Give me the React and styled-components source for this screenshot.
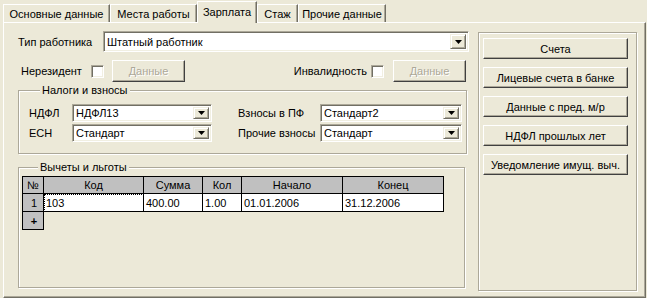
import React from "react";
import styled, { createGlobalStyle } from "styled-components";

const GlobalStyle = createGlobalStyle`
  html, body {
    margin: 0;
    padding: 0;
    background: #ece9d8;
  }
  body {
    font-family: "Liberation Sans", Arial, sans-serif;
    font-size: 11px;
    color: #000;
  }
`;

const Window = styled.div`
  width: 647px;
  height: 298px;
  display: flex;
  flex-direction: column;
  background: #ece9d8;
  overflow: hidden;
`;

const TabBar = styled.div`
  height: 22px;
  display: flex;
  align-items: flex-end;
  padding-left: 3px;
  box-sizing: border-box;
`;

const Tab = styled.div`
  width: ${(p) => p.$w}px;
  height: 18px;
  box-sizing: border-box;
  display: flex;
  align-items: center;
  justify-content: center;
  padding-top: 1px;
  border-top: 1px solid #fff;
  border-left: 1px solid #fff;
  border-right: 1px solid #716f64;
  box-shadow: inset -1px 0 0 #aca899;
  background: #ece9d8;
  white-space: nowrap;
  ${(p) =>
    p.$active &&
    `
    position: relative;
    z-index: 1;
    margin-bottom: -1px;
    height: 22px;
    padding-top: 0;
    padding-bottom: 1px;
  `}
`;

const Panel = styled.div`
  flex: 1;
  margin: 0 1px 0 3px;
  display: flex;
  align-items: flex-start;
  padding: 8px 0 0 14px;
  border-top: 1px solid #fff;
  border-left: 1px solid #fff;
  border-right: 1px solid #716f64;
  border-bottom: 1px solid #716f64;
  box-shadow: inset -1px -1px 0 #aca899;
  box-sizing: border-box;
`;

const LeftCol = styled.div`
  width: 451px;
  display: flex;
  flex-direction: column;
`;

const Row = styled.div`
  display: flex;
  align-items: center;
  height: ${(p) => p.$h || 21}px;
  margin-top: ${(p) => p.$mt || 0}px;
  padding-left: ${(p) => p.$pl || 0}px;
  padding-right: ${(p) => p.$pr || 0}px;
`;

const Label = styled.span`
  width: ${(p) => (p.$w ? `${p.$w}px` : "auto")};
  flex-shrink: 0;
  white-space: nowrap;
`;

const Spacer = styled.div`
  flex: 1;
`;

const SelectBox = styled.div`
  flex: ${(p) => (p.$w ? "none" : 1)};
  width: ${(p) => (p.$w ? `${p.$w}px` : "auto")};
  height: ${(p) => p.$h || 21}px;
  box-sizing: border-box;
  display: flex;
  align-items: center;
  background: #fff;
  border: 1px solid;
  border-color: #aca899 #fff #fff #aca899;
  box-shadow: inset 1px 1px 0 #716f64, inset -1px -1px 0 #f1efe2;
  padding: 2px 2px 2px 3px;
`;

const SelectText = styled.span`
  flex: 1;
  white-space: nowrap;
  overflow: hidden;
`;

const DropButton = styled.div`
  width: 16px;
  height: 100%;
  box-sizing: border-box;
  display: flex;
  align-items: center;
  justify-content: center;
  background: #ece9d8;
  border: 1px solid;
  border-color: #f1efe2 #716f64 #716f64 #f1efe2;
  box-shadow: inset 1px 1px 0 #fff, inset -1px -1px 0 #aca899;
`;

const Checkbox = styled.div`
  width: 13px;
  height: 13px;
  box-sizing: border-box;
  flex-shrink: 0;
  background: #fff;
  border: 1px solid;
  border-color: #aca899 #fff #fff #aca899;
  box-shadow: inset 1px 1px 0 #716f64, inset -1px -1px 0 #f1efe2;
  margin-left: ${(p) => p.$ml || 0}px;
`;

const Button = styled.div`
  width: ${(p) => p.$w || 145}px;
  height: ${(p) => p.$h || 21}px;
  box-sizing: border-box;
  flex-shrink: 0;
  display: flex;
  align-items: center;
  justify-content: center;
  margin-left: ${(p) => p.$ml || 0}px;
  background: #ece9d8;
  border: 1px solid;
  border-color: #fff #404040 #404040 #fff;
  box-shadow: inset -1px -1px 0 #aca899;
  color: ${(p) => (p.$disabled ? "#aca899" : "#000")};
  text-shadow: ${(p) => (p.$disabled ? "1px 1px 0 #fff" : "none")};
  white-space: nowrap;
`;

const GroupBox = styled.fieldset`
  margin: ${(p) => p.$mt || 0}px 0 0 0;
  width: ${(p) => p.$w}px;
  height: ${(p) => p.$h}px;
  box-sizing: border-box;
  padding: ${(p) => p.$pad};
  border: 1px solid #aca899;
  box-shadow: inset 1px 1px 0 #fff, 1px 1px 0 #fff;
  min-width: 0;
`;

const Legend = styled.legend`
  padding: 0 2px;
  margin-left: ${(p) => p.$ml}px;
  line-height: 13px;
  background: #ece9d8;
`;

const TaxGrid = styled.div`
  display: grid;
  grid-template-columns: 43px 140px 26px 82px 142px;
  grid-auto-rows: 17px;
  row-gap: 3px;
  align-items: center;
`;

const Table = styled.table`
  border-collapse: collapse;
  table-layout: fixed;
  width: 422px;
`;

const Th = styled.th`
  height: 16px;
  padding: 0;
  border: 1px solid #000;
  background: #c0c0c0;
  font-weight: normal;
  text-align: center;
  line-height: 14px;
`;

const Td = styled.td`
  height: 17px;
  padding: 0 0 0 2px;
  border: ${(p) => (p.$empty ? "none" : "1px solid #000")};
  background: ${(p) => (p.$gray ? "#c0c0c0" : p.$empty ? "transparent" : "#fff")};
  text-align: ${(p) => (p.$center ? "center" : "left")};
  font-weight: ${(p) => (p.$bold ? "bold" : "normal")};
  outline: ${(p) => (p.$focus ? "1px dotted #000" : "none")};
  outline-offset: -1px;
  white-space: nowrap;
  line-height: 14px;
`;

const SideBox = styled.div`
  width: 159px;
  height: 259px;
  margin: 1px 0 0 9px;
  box-sizing: border-box;
  padding: 5px 0 0 4px;
  border: 1px solid #aca899;
  box-shadow: inset 1px 1px 0 #fff, 1px 1px 0 #fff;
  display: flex;
  flex-direction: column;
  gap: 8px;
`;

const Arrow = () => (
  <svg width="7" height="4" viewBox="0 0 7 4">
    <path d="M0 0h7L3.5 4z" fill="#000" />
  </svg>
);

const Select = ({ value, w, h }) => (
  <SelectBox $w={w} $h={h}>
    <SelectText>{value}</SelectText>
    <DropButton>
      <Arrow />
    </DropButton>
  </SelectBox>
);

const tabs = [
  { label: "Основные данные", w: 107 },
  { label: "Места работы", w: 87 },
  { label: "Зарплата", w: 60, active: true },
  { label: "Стаж", w: 41 },
  { label: "Прочие данные", w: 88 },
];

const sideButtons = [
  "Счета",
  "Лицевые счета в банке",
  "Данные с пред. м/р",
  "НДФЛ прошлых лет",
  "Уведомление имущ. выч.",
];

const deductions = [
  { code: "103", sum: "400.00", qty: "1.00", start: "01.01.2006", end: "31.12.2006" },
];

const App = () => {
  return (
    <>
      <GlobalStyle />
      <Window>
        <TabBar>
          {tabs.map((t) => (
            <Tab key={t.label} $w={t.w} $active={t.active}>
              {t.label}
            </Tab>
          ))}
        </TabBar>
        <Panel>
          <LeftCol>
            <Row>
              <Label $w={85}>Тип работника</Label>
              <Select value="Штатный работник" />
            </Row>
            <Row $h={22} $mt={8} $pl={3} $pr={3}>
              <Label $w={70}>Нерезидент</Label>
              <Checkbox />
              <Button $w={73} $h={22} $ml={8} $disabled>
                Данные
              </Button>
              <Spacer />
              <Label>Инвалидность</Label>
              <Checkbox $ml={4} />
              <Button $w={73} $h={22} $ml={9} $disabled>
                Данные
              </Button>
            </Row>
            <GroupBox $mt={2} $w={449} $h={70} $pad="7px 0 0 10px">
              <Legend $ml={11}>Налоги и взносы</Legend>
              <TaxGrid>
                <Label>НДФЛ</Label>
                <Select value="НДФЛ13" h={18} />
                <span />
                <Label>Взносы в ПФ</Label>
                <Select value="Стандарт2" h={18} />
                <Label>ЕСН</Label>
                <Select value="Стандарт" h={18} />
                <span />
                <Label>Прочие взносы</Label>
                <Select value="Стандарт" h={18} />
              </TaxGrid>
            </GroupBox>
            <GroupBox $mt={7} $w={447} $h={127} $pad="2px 0 0 3px">
              <Legend $ml={16}>Вычеты и льготы</Legend>
              <Table>
                <colgroup>
                  <col style={{ width: 21 }} />
                  <col style={{ width: 100 }} />
                  <col style={{ width: 59 }} />
                  <col style={{ width: 39 }} />
                  <col style={{ width: 101 }} />
                  <col style={{ width: 101 }} />
                </colgroup>
                <thead>
                  <tr>
                    <Th>№</Th>
                    <Th>Код</Th>
                    <Th>Сумма</Th>
                    <Th>Кол</Th>
                    <Th>Начало</Th>
                    <Th>Конец</Th>
                  </tr>
                </thead>
                <tbody>
                  {deductions.map((d, i) => (
                    <tr key={i}>
                      <Td $gray $center>
                        {i + 1}
                      </Td>
                      <Td $focus>{d.code}</Td>
                      <Td>{d.sum}</Td>
                      <Td>{d.qty}</Td>
                      <Td>{d.start}</Td>
                      <Td>{d.end}</Td>
                    </tr>
                  ))}
                  <tr>
                    <Td $gray $center $bold>
                      +
                    </Td>
                    <Td $empty />
                    <Td $empty />
                    <Td $empty />
                    <Td $empty />
                    <Td $empty />
                  </tr>
                </tbody>
              </Table>
            </GroupBox>
          </LeftCol>
          <SideBox>
            {sideButtons.map((b) => (
              <Button key={b}>{b}</Button>
            ))}
          </SideBox>
        </Panel>
      </Window>
    </>
  );
};

export default App;
